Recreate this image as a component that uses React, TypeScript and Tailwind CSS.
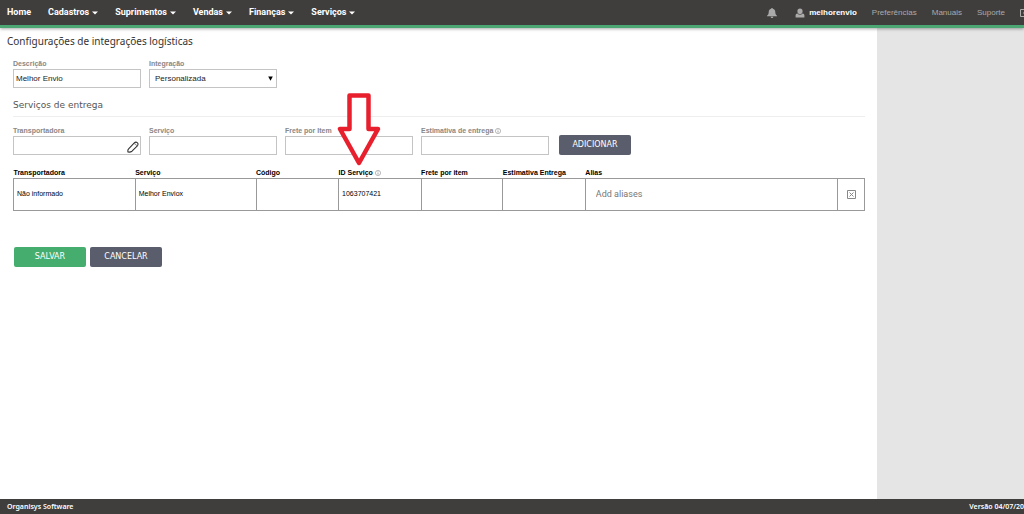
import { ReactNode } from "react";

const MENU = ["Cadastros", "Suprimentos", "Vendas", "Finanças", "Serviços"];
const LINKS = ["Preferências", "Manuais", "Suporte"];

const InfoIcon = () => (
    <svg viewBox="0 0 12 12" className="h-1.5 w-1.5 shrink-0" fill="none" stroke="#777" aria-hidden="true">
        <circle cx="6" cy="6" r="5.2" />
        <path d="M6 5v4.2M6 2.6v1.2" strokeWidth="1.3" />
    </svg>
);

const PencilIcon = () => (
    <svg viewBox="0 0 12 12" className="h-3 w-3" fill="none" stroke="#333" strokeLinejoin="round" aria-hidden="true">
        <path d="M1 11q-.5-2 .6-3.200L7.300 1.900Q8.800.6 10.200 1.600t.4 3L5 10.200Q3.500 11.400 1 11z" strokeWidth="1.100" />
        <path d="M7.200 2.600q1.800.2 2.400 2.200" strokeWidth=".6" />
    </svg>
);

interface FieldProps {
    id: string;
    label: string;
    info?: boolean;
    children?: ReactNode;
}

function Field({ id, label, info, children }: FieldProps) {
    return (
        <div className="w-32">
            <label htmlFor={id} className="flex h-[11px] items-center gap-0.5 text-[7px] font-bold leading-[11px] text-[#888]">
                {label}
                {info && <InfoIcon />}
            </label>
            {children ?? <input id={id} type="text" className="block h-[19px] w-full border border-[#c4c4c4] bg-white px-0.5 text-[8px]" />}
        </div>
    );
}

function Header() {
    return (
        <header className="relative z-10 flex h-7 justify-between overflow-hidden border-b-[3px] border-[#4ba673] bg-[#403e3d] shadow-[0_1px_3px_rgba(0,0,0,0.35)]">
            <nav className="flex items-center gap-[17px] pl-[7px] font-[Roboto,sans-serif] text-[9px] font-bold text-white">
                <a href="#home">Home</a>
                {MENU.map((item) => (
                    <button key={item} type="button" className="flex items-center gap-[3px] whitespace-nowrap">
                        {item}
                        <svg viewBox="0 0 6 4" className="h-1 w-1.5" fill="currentColor" aria-hidden="true">
                            <path d="M0 .5h6L3 3.5z" />
                        </svg>
                    </button>
                ))}
            </nav>
            <div className="flex items-center text-[8px] text-[#aaa]">
                <button type="button" aria-label="Notificações" className="mr-[18px]">
                    <svg viewBox="0 0 10 10" className="h-2.5 w-2.5" fill="#aaa" aria-hidden="true">
                        <path d="M5 0c.6 0 .9.4.9.8C7.6 1.3 8.300 2.700 8.300 4.200c0 1.700.5 2.500 1.700 3.600v.5H0v-.5C1.200 6.700 1.700 5.900 1.700 4.200 1.700 2.700 2.400 1.300 4.100.8 4.100.4 4.400 0 5 0zM3.700 8.700h2.600c0 .7-.5 1.300-1.300 1.300s-1.300-.6-1.300-1.300z" />
                    </svg>
                </button>
                <a href="#conta" className="flex items-center gap-1 font-bold text-white">
                    <svg viewBox="0 0 10 10" className="h-2.5 w-2.5" fill="#aaa" aria-hidden="true">
                        <path d="M5 .5c1.700 0 2.600 1.100 2.600 2.700S6.700 6.200 5 6.200 2.400 4.800 2.400 3.200 3.300.5 5 .5zM.6 9.600V7.200c0-1 .7-1.600 1.900-1.800C3.200 6.300 4.100 6.800 5 6.800s1.800-.5 2.500-1.400c1.200.2 1.900.8 1.900 1.800v2.400z" />
                    </svg>
                    melhorenvio
                </a>
                <div className="ml-[15px] flex gap-[15px]">
                    {LINKS.map((link) => (
                        <a key={link} href={`#${link}`}>{link}</a>
                    ))}
                </div>
                <button type="button" aria-label="Sair" className="ml-[15px] w-1 overflow-hidden">
                    <svg viewBox="0 0 8 8" className="h-2 w-2 max-w-none" fill="none" stroke="#aaa" aria-hidden="true">
                        <path d="M6 .5H.5v7H6M3 4h4" />
                    </svg>
                </button>
            </div>
        </header>
    );
}

function ServicesTable() {
    return (
        <table className="mt-[13px] w-full table-fixed border-collapse text-left text-[7px] text-black">
            <colgroup>
                <col className="w-[14.3%]" />
                <col className="w-[14.2%]" />
                <col className="w-[9.7%]" />
                <col className="w-[9.7%]" />
                <col className="w-[9.6%]" />
                <col className="w-[9.7%]" />
                <col />
                <col className="w-[27px]" />
            </colgroup>
            <thead>
                <tr className="h-2.5 leading-[10px]">
                    <th>Transportadora</th>
                    <th>Serviço</th>
                    <th>Código</th>
                    <th>
                        <span className="flex items-center gap-0.5">ID Serviço <InfoIcon /></span>
                    </th>
                    <th>Frete por item</th>
                    <th>Estimativa Entrega</th>
                    <th>Alias</th>
                    <th aria-label="Remover"></th>
                </tr>
            </thead>
            <tbody>
                <tr className="h-8 [&>td]:border [&>td]:border-[#999] [&>td]:px-[3px]">
                    <td>Não informado</td>
                    <td>Melhor Enviox</td>
                    <td></td>
                    <td>1063707421</td>
                    <td></td>
                    <td></td>
                    <td>
                        <input
                            type="text"
                            aria-label="Alias"
                            placeholder="Add aliases"
                            className="w-full px-[7px] font-[Roboto,sans-serif] text-[9px] placeholder:text-[#777]"
                        />
                    </td>
                    <td>
                        <button type="button" aria-label="Remover serviço" className="mx-auto block">
                            <svg viewBox="0 0 9 9" className="h-[9px] w-[9px]" fill="none" stroke="#888" aria-hidden="true">
                                <path d="M.5.5h8v8h-8zM2.500 2.500l4 4M6.500 2.500l-4 4" />
                            </svg>
                        </button>
                    </td>
                </tr>
            </tbody>
        </table>
    );
}

const BUTTON = "h-5 w-[72px] rounded-xs font-['DejaVu_Sans',Verdana,sans-serif] text-[8px] text-white";

export default function App() {
    return (
        <div className="flex min-h-screen flex-col bg-white font-['Liberation_Sans',Arial,sans-serif]">
            <Header />
            <div className="flex flex-1">
                <main className="relative min-w-0 flex-1 pr-3 pl-[13px]">
                    <h1 className="-ml-1.5 pt-[7px] font-['Noto_Sans',Verdana,sans-serif] text-[10px] leading-3 text-[#333]">
                        Configurações de integrações logísticas
                    </h1>
                    <form>
                        <div className="mt-[11px] flex gap-2">
                            <Field id="descricao" label="Descrição">
                                <input
                                    id="descricao"
                                    type="text"
                                    defaultValue="Melhor Envio"
                                    className="block h-[19px] w-full border border-[#c4c4c4] px-0.5 text-[8px] text-[#222]"
                                />
                            </Field>
                            <Field id="integracao" label="Integração">
                                <div className="relative">
                                    <select
                                        id="integracao"
                                        className="block h-[19px] w-full appearance-none border border-[#c4c4c4] bg-white px-[5px] text-[8px] text-[#222]"
                                    >
                                        <option>Personalizada</option>
                                    </select>
                                    <svg viewBox="0 0 5 5" className="pointer-events-none absolute top-[7px] right-1 h-[5px] w-[5px]" aria-hidden="true">
                                        <path d="M.2.5h4.600L2.500 4.800z" />
                                    </svg>
                                </div>
                            </Field>
                        </div>

                        <h2 className="mt-[11px] border-b border-[#eee] pb-[5px] font-['DejaVu_Sans',Verdana,sans-serif] text-[9px] leading-3 text-[#555]">
                            Serviços de entrega
                        </h2>
                        <div className="mt-2 flex gap-2">
                            <Field id="transportadora" label="Transportadora">
                                <div className="relative">
                                    <input id="transportadora" type="text" className="block h-[19px] w-full border border-[#c4c4c4] pr-4 pl-0.5 text-[8px]" />
                                    <button type="button" aria-label="Escolher transportadora" className="absolute right-0.5 bottom-0.5">
                                        <PencilIcon />
                                    </button>
                                </div>
                            </Field>
                            <Field id="servico" label="Serviço" />
                            <Field id="frete" label="Frete por Item" />
                            <Field id="estimativa" label="Estimativa de entrega" info />
                            <button type="button" className={`${BUTTON} ml-0.5 self-end bg-[#595d6c]`}>ADICIONAR</button>
                        </div>

                        <ServicesTable />

                        <div className="mt-9 flex gap-1 pl-px">
                            <button type="submit" className={`${BUTTON} bg-[#45ae6f]`}>SALVAR</button>
                            <button type="button" className={`${BUTTON} bg-[#595d6c]`}>CANCELAR</button>
                        </div>
                    </form>

                    <svg viewBox="0 0 44 74" className="pointer-events-none absolute top-16 left-[337px] h-[74px] w-11" aria-hidden="true">
                        <path d="M12.500 3.500h19v33.500h9.500L22 71 3 37h9.500z" fill="#fff" stroke="#e8202e" strokeWidth="4.500" strokeLinejoin="round" />
                    </svg>
                </main>
                <aside className="w-[147px] shrink-0 bg-[#e5e5e5]"></aside>
            </div>
            <footer className="flex h-[15px] items-center justify-between overflow-hidden bg-[#403e3d] pt-0.5 pl-[7px] font-['Noto_Sans',sans-serif] text-[7px] font-semibold whitespace-nowrap text-white">
                <span>Organisys Software</span>
                <span>Versão 04/07/20</span>
            </footer>
        </div>
    );
}
